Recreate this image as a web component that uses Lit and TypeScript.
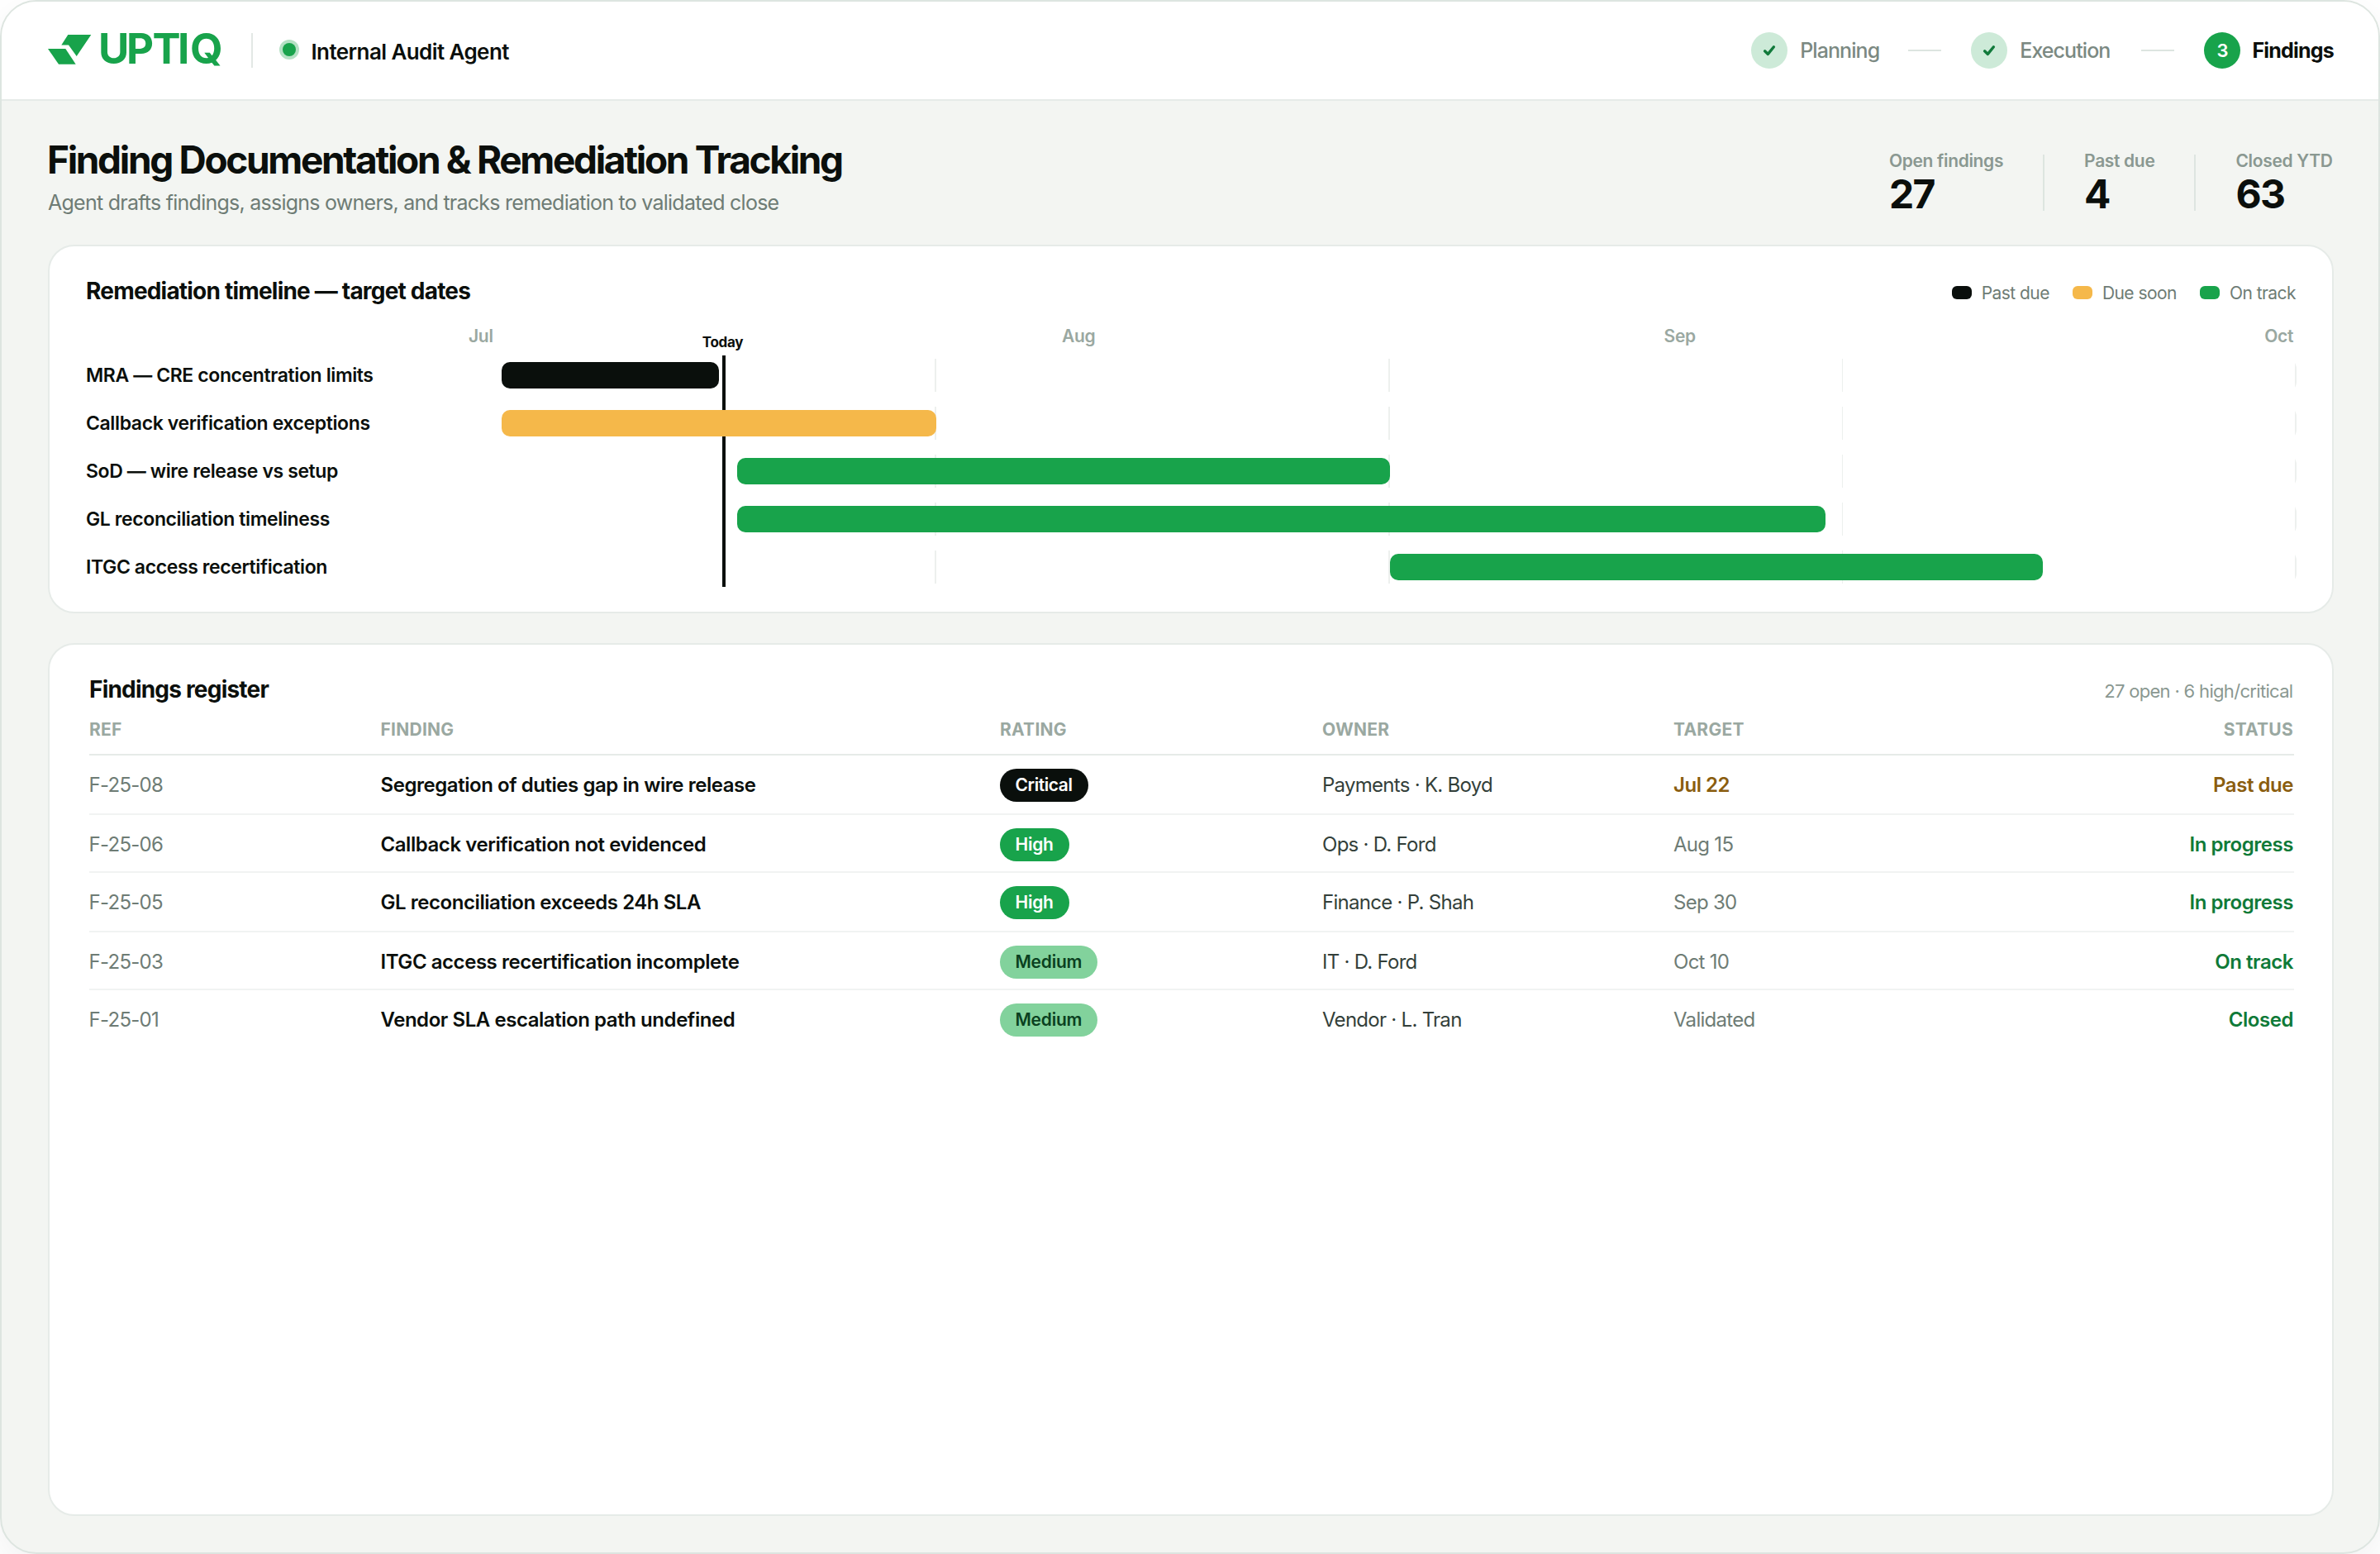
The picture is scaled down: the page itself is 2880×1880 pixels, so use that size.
import { LitElement, html, css, svg } from "lit";
import { customElement } from "lit/decorators.js";
import { classMap } from "lit/directives/class-map.js";

type Tone = "black" | "amber" | "green";

interface Bar {
  label: string;
  start: number;
  span: number;
  tone: Tone;
}

interface Finding {
  ref: string;
  finding: string;
  rating: "Critical" | "High" | "Medium";
  owner: string;
  target: string;
  status: string;
  late?: boolean;
}

const STATS = [
  { label: "Open findings", value: "27" },
  { label: "Past due", value: "4" },
  { label: "Closed YTD", value: "63" },
];

const LEGEND: { label: string; tone: Tone }[] = [
  { label: "Past due", tone: "black" },
  { label: "Due soon", tone: "amber" },
  { label: "On track", tone: "green" },
];

const BARS: Bar[] = [
  { label: "MRA — CRE concentration limits", start: 1, span: 12, tone: "black" },
  { label: "Callback verification exceptions", start: 1, span: 24, tone: "amber" },
  { label: "SoD — wire release vs setup", start: 14, span: 36, tone: "green" },
  { label: "GL reconciliation timeliness", start: 14, span: 60, tone: "green" },
  { label: "ITGC access recertification", start: 50, span: 36, tone: "green" },
];

const FINDINGS: Finding[] = [
  { ref: "F-25-08", finding: "Segregation of duties gap in wire release", rating: "Critical", owner: "Payments · K. Boyd", target: "Jul 22", status: "Past due", late: true },
  { ref: "F-25-06", finding: "Callback verification not evidenced", rating: "High", owner: "Ops · D. Ford", target: "Aug 15", status: "In progress" },
  { ref: "F-25-05", finding: "GL reconciliation exceeds 24h SLA", rating: "High", owner: "Finance · P. Shah", target: "Sep 30", status: "In progress" },
  { ref: "F-25-03", finding: "ITGC access recertification incomplete", rating: "Medium", owner: "IT · D. Ford", target: "Oct 10", status: "On track" },
  { ref: "F-25-01", finding: "Vendor SLA escalation path undefined", rating: "Medium", owner: "Vendor · L. Tran", target: "Validated", status: "Closed" },
];

const LETTERS: [string, number][] = [["U", 119], ["P", 153], ["T", 184.5], ["I", 215], ["Q", 230]];

@customElement("app-root")
export class AppRoot extends LitElement {
  static styles = css`
    :host {
      display: block;
      width: 2880px;
      height: 1880px;
      overflow: hidden;
      background: #fff;
      color: #0b0f0c;
      font-family: Inter, "Liberation Sans", sans-serif;
    }
    * { box-sizing: border-box; }
    .frame {
      height: 1880px;
      border: 2px solid #dde5e0;
      border-radius: 44px;
      background: #f3f5f2;
      display: flex;
      flex-direction: column;
      overflow: hidden;
      box-shadow: 0 16px 48px rgba(11, 15, 12, 0.06);
    }
    .topbar {
      height: 120px;
      flex: none;
      background: #fff;
      border-bottom: 2px solid #e6ebe8;
      padding: 0 54px 0 56px;
      display: flex;
      align-items: center;
      justify-content: space-between;
      white-space: nowrap;
    }
    .brand, .agent, .steps, .step, .stats, .legend, .key { display: flex; align-items: center; }
    .logo { width: 212px; height: 48px; display: block; overflow: visible; }
    .logo text { font: 700 51px Inter, "Liberation Sans", sans-serif; }
    .rule { width: 2px; height: 42px; background: #e3e8e5; margin: 0 32px 0 34px; }
    .dot { width: 16px; height: 16px; border-radius: 50%; background: #18a34b; box-shadow: 0 0 0 4px #b5e1c4; margin: 0 18.5px 2px 4px; }
    .name { font-size: 26px; font-weight: 600; letter-spacing: -0.0225em; padding-top: 2px; }
    .step { gap: 15.5px; font-size: 25px; font-weight: 500; letter-spacing: -0.037em; color: #7b8982; }
    .planning { margin-right: -1.5px; }
    .execution { margin-right: 2px; }
    .step.now { gap: 14px; font-weight: 700; letter-spacing: -0.032em; color: #0b0f0c; }
    .bubble {
      width: 44px; height: 44px; border-radius: 50%;
      background: #cdead8; display: flex; align-items: center; justify-content: center;
    }
    .now .bubble { background: #18a34b; color: #fff; font-size: 22px; font-weight: 600; letter-spacing: 0; }
    .bubble svg { width: 20px; height: 20px; display: block; }
    .dash { width: 40px; height: 2px; background: #dde5e0; margin: 0 36px; }

    .body { flex: 1; display: flex; flex-direction: column; gap: 36px; padding: 43px 54px 44px 56px; }
    .head { display: flex; justify-content: space-between; align-items: flex-end; white-space: nowrap; }
    .title { margin: 0 0 0 -1px; font-size: 46px; line-height: 56px; font-weight: 700; letter-spacing: -0.0507em; }
    .sub { margin: 9px 0 0; font-size: 25px; line-height: 30px; letter-spacing: -0.0299em; color: #6e7c75; }
    .stats { gap: 48px; padding: 0 1.5px 1px 0; }
    .sep { width: 2px; height: 68px; background: #dde5e0; }
    .stat-label { font-size: 21px; line-height: 25px; font-weight: 600; letter-spacing: -0.016em; color: #8a9891; }
    .stat-value { margin-top: 4px; font-size: 48px; line-height: 48px; font-weight: 700; letter-spacing: -0.036em; }

    .card { background: #fff; border: 2px solid #e6ebe8; border-radius: 32px; }
    .card-head { display: flex; justify-content: space-between; align-items: baseline; white-space: nowrap; }
    .card-title { margin: 0; font-size: 28px; line-height: 34px; font-weight: 700; letter-spacing: -0.0285em; }

    .timeline { height: 446px; padding: 37px 43px 0 44px; }
    .legend { gap: 28px; font-size: 21px; letter-spacing: -0.026em; color: #6e7c75; padding-right: 1px; }
    .key { gap: 12px; }
    .swatch { width: 24px; height: 16px; border-radius: 6px; }
    .black { background: #0a0f0c; }
    .amber { background: #f5b84a; }
    .green { background: #18a34b; }
    .months {
      display: flex; justify-content: space-between;
      margin: 25px 4px 0 463px;
      font-size: 21px; line-height: 25px; font-weight: 600; letter-spacing: -0.015em; color: #9aa8a1;
    }
    .gantt { position: relative; margin-top: 15px; display: flex; flex-direction: column; gap: 18px; }
    .lane { display: grid; grid-template-columns: 481px 1fr; align-items: center; height: 40px; }
    .lane-label { font-size: 23px; font-weight: 600; letter-spacing: -0.017em; white-space: nowrap; }
    .track {
      height: 40px; border-radius: 12px; padding: 4px 0;
      background: repeating-linear-gradient(90deg, transparent 0, transparent calc(25% - 2px), #edf0ee calc(25% - 2px), #edf0ee 25%);
    }
    .bar { position: relative; height: 32px; border-radius: 10px; }
    .today { position: absolute; left: 770px; top: -4px; width: 4px; height: 280px; background: #0a0f0c; }
    .today-label {
      position: absolute; left: 50%; bottom: 100%; transform: translateX(-50%); margin-left: -1.5px;
      margin-bottom: 6px; font-size: 17px; line-height: 20px; font-weight: 700; letter-spacing: -0.015em;
    }

    .register { flex: 1; padding: 37px 46px 0 48px; }
    .count { font-size: 22px; letter-spacing: -0.031em; color: #8a9891; padding-right: 1.5px; }
    .row { display: grid; grid-template-columns: 352.5px 749.5px 390px 425px 1fr auto; white-space: nowrap; }
    .row > :last-child { text-align: right; padding-right: 1px; }
    .th {
      margin-top: 8px; height: 55px; padding-top: 11px; border-bottom: 2px solid #e6ebe8;
      font-size: 21px; line-height: 25px; font-weight: 700; letter-spacing: 0.012em;
      text-transform: uppercase; color: #9aa8a1;
    }
    .td {
      height: 70px; padding-top: 16px; border-bottom: 2px solid #f1f3f2;
      font-size: 24px; line-height: 40px; letter-spacing: -0.03em; color: #6e7c75;
    }
    .td:nth-child(odd) { height: 72px; }
    .td:last-child { border-bottom: 0; }
    .ref { margin-left: -0.5px; }
    .finding { color: #0b0f0c; font-weight: 600; letter-spacing: -0.0185em; }
    .owner { color: #333f3a; }
    .status { color: #0f7a38; font-weight: 600; letter-spacing: -0.019em; }
    .late { color: #8a5d0f; font-weight: 600; letter-spacing: -0.019em; }
    .pill {
      justify-self: start; height: 40px; border-radius: 20px; padding: 0 19px 0 18.5px;
      font-size: 21px; font-weight: 600; letter-spacing: -0.012em; color: #fff;
    }
    .critical { background: #0a0f0c; letter-spacing: -0.02em; }
    .high { background: #18a34b; }
    .medium { background: #82d29c; color: #0a4020; }
  `;

  private logo() {
    return html`<svg class="logo" viewBox="58 37 212 48" fill="#18a34b">
      <path d="M82.3 42H110.3L92.7 68L83 54.4H74.3Z" />
      <path d="M58 59H79.3L91.7 77.8H71Z" />
      ${LETTERS.map(([c, x]) => svg`<text x=${x} y="77">${c}</text>`)}
    </svg>`;
  }

  private done(label: string) {
    return html`<div class="step">
        <span class="bubble"><svg viewBox="0 0 20 20" fill="none" stroke="#117a3b" stroke-width="3.4" stroke-linecap="round" stroke-linejoin="round"><path d="M4.6 10.8L8.4 14.4L15.4 5.8" /></svg></span>
        <span class=${label.toLowerCase()}>${label}</span>
      </div>
      <span class="dash"></span>`;
  }

  render() {
    return html`<div class="frame">
      <header class="topbar">
        <div class="brand">
          ${this.logo()}
          <span class="rule"></span>
          <div class="agent"><span class="dot"></span><span class="name">Internal Audit Agent</span></div>
        </div>
        <nav class="steps">
          ${this.done("Planning")}${this.done("Execution")}
          <div class="step now"><span class="bubble">3</span><span>Findings</span></div>
        </nav>
      </header>
      <main class="body">
        <section class="head">
          <div>
            <h1 class="title">Finding Documentation &amp; Remediation Tracking</h1>
            <p class="sub">Agent drafts findings, assigns owners, and tracks remediation to validated close</p>
          </div>
          <div class="stats">
            ${STATS.map((s, i) => html`${i ? html`<span class="sep"></span>` : ""}
              <div><div class="stat-label">${s.label}</div><div class="stat-value">${s.value}</div></div>`)}
          </div>
        </section>
        <section class="card timeline">
          <div class="card-head">
            <h2 class="card-title">Remediation timeline — target dates</h2>
            <div class="legend">
              ${LEGEND.map((l) => html`<span class="key"><span class=${classMap({ swatch: true, [l.tone]: true })}></span>${l.label}</span>`)}
            </div>
          </div>
          <div class="months"><span>Jul</span><span>Aug</span><span>Sep</span><span>Oct</span></div>
          <div class="gantt">
            <div class="today"><span class="today-label">Today</span></div>
            ${BARS.map((b) => html`<div class="lane">
              <span class="lane-label">${b.label}</span>
              <div class="track"><div class=${classMap({ bar: true, [b.tone]: true })} style="margin-left:${b.start}%;width:${b.span}%"></div></div>
            </div>`)}
          </div>
        </section>
        <section class="card register">
          <div class="card-head">
            <h2 class="card-title">Findings register</h2>
            <span class="count">27 open · 6 high/critical</span>
          </div>
          <div class="row th"><span>Ref</span><span>Finding</span><span>Rating</span><span>Owner</span><span>Target</span><span>Status</span></div>
          <div class="rows">
            ${FINDINGS.map((f) => html`<div class="row td">
              <span class="ref">${f.ref}</span>
              <span class="finding">${f.finding}</span>
              <span class=${classMap({ pill: true, [f.rating.toLowerCase()]: true })}>${f.rating}</span>
              <span class="owner">${f.owner}</span>
              <span class=${classMap({ late: !!f.late })}>${f.target}</span>
              <span class=${classMap({ status: !f.late, late: !!f.late })}>${f.status}</span>
            </div>`)}
          </div>
        </section>
      </main>
    </div>`;
  }
}
